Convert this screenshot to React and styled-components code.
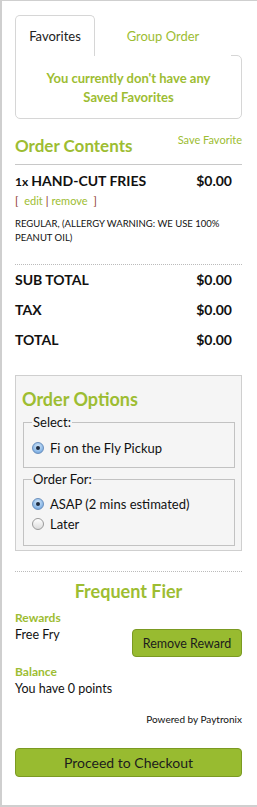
import React from 'react';
import styled, { createGlobalStyle } from 'styled-components';

const GREEN = '#9dbd32';

const GlobalStyle = createGlobalStyle`
  body {
    margin: 0;
    font-family: Lato, "Open Sans", sans-serif;
    color: #111;
    background: #fff;
  }
`;

const Page = styled.div`
  box-sizing: border-box;
  width: 257px;
  height: 807px;
  border-top: 1px solid #cfcfcf;
  border-left: 2px solid #cfcfcf;
  border-bottom: 2px solid #cfcfcf;
  padding: 14px 15px 0 13px;
`;

const TabRow = styled.div`
  display: flex;
`;

const Tab = styled.div`
  width: ${(p) => (p.active ? 80 : 136)}px;
  height: 41px;
  box-sizing: border-box;
  display: flex;
  align-items: center;
  justify-content: center;
  font-size: 13px;
  color: ${(p) => (p.active ? '#222' : GREEN)};
  background: #fff;
  border: 1px solid ${(p) => (p.active ? '#d6d6d6' : 'transparent')};
  border-bottom: none;
  border-radius: 5px 5px 0 0;
  margin-bottom: -1px;
  position: relative;
  z-index: 1;
`;

const TabPanel = styled.div`
  box-sizing: border-box;
  height: 64px;
  border: 1px solid #d6d6d6;
  border-radius: 0 5px 5px 5px;
  display: flex;
  align-items: center;
  justify-content: center;
  text-align: center;
  font-size: 13px;
  line-height: 19px;
  font-weight: 700;
  color: ${GREEN};
  padding-top: 2px;
`;

const SectionHead = styled.div`
  display: flex;
  justify-content: space-between;
  align-items: flex-start;
  margin-top: 14px;
  padding-bottom: 5px;
  border-bottom: 1px solid #c8c8c8;
`;

const Title = styled.h2`
  margin: 0;
  font-size: ${(p) => p.size || 17}px;
  line-height: 26px;
  font-weight: 700;
  color: ${GREEN};
  text-align: ${(p) => (p.center ? 'center' : 'left')};
`;

const SmallLink = styled.span`
  font-size: 11px;
  line-height: 14px;
  color: ${GREEN};
`;

const Item = styled.div`
  padding: 7px 10px 19px 0;
  border-bottom: 1px dotted #bbb;
`;

const ItemRow = styled.div`
  display: flex;
  justify-content: space-between;
  align-items: baseline;
  font-weight: 700;
  font-size: 14px;
  line-height: 18px;
`;

const Qty = styled.span`
  font-size: 12px;
  margin-right: 3px;
`;

const EditLinks = styled.div`
  margin-top: 2px;
  font-size: 11px;
  line-height: 16px;
  color: #8a3324;
  a {
    color: ${GREEN};
    text-decoration: none;
    margin: 0 3px;
  }
`;

const Note = styled.div`
  margin-top: 8px;
  font-size: 9.5px;
  line-height: 14px;
  text-transform: uppercase;
`;

const Totals = styled.div`
  padding: 0 10px 0 0;
`;

const TotalRow = styled.div`
  display: flex;
  justify-content: space-between;
  font-weight: 700;
  font-size: 14px;
  line-height: 30px;
`;

const OptionsBox = styled.div`
  margin-top: 20px;
  box-sizing: border-box;
  height: 176px;
  background: #f5f5f5;
  border: 1px solid #cfcfcf;
  padding: 11px 6px 0 7px;
  h2 {
    line-height: 24px;
    margin-left: -1px;
  }
`;

const Fieldset = styled.fieldset`
  margin: 3px 0 0 0;
  border: 1px solid #c2c2c2;
  padding: ${(p) => (p.first ? '8px 8px 9px' : '7px 8px 11px')};
  min-width: 0;
  legend {
    font-size: 13px;
    line-height: 16px;
    padding: 0 1px;
    margin-left: 0;
  }
`;

const RadioLabel = styled.label`
  display: flex;
  align-items: center;
  gap: 6px;
  height: 20px;
  font-size: 13px;
`;

const Radio = styled.span`
  box-sizing: border-box;
  width: 12px;
  height: 12px;
  border-radius: 50%;
  border: 1px solid ${(p) => (p.checked ? '#6a8fbd' : '#9a9a9a')};
  background: ${(p) =>
    p.checked
      ? 'radial-gradient(circle at 50% 35%, #d5e7f8 0%, #8fbbe8 60%, #5d93d3 100%)'
      : 'linear-gradient(#ffffff, #dcdcdc)'};
  display: flex;
  align-items: center;
  justify-content: center;
  &::after {
    content: '';
    width: 4px;
    height: 4px;
    border-radius: 50%;
    background: ${(p) => (p.checked ? '#1d2b40' : 'transparent')};
  }
`;

const Frequent = styled.div`
  margin-top: 20px;
  border-top: 1px dotted #bbb;
  padding-top: 7px;
  h2 {
    line-height: 24px;
  }
`;

const Label = styled.div`
  margin-top: ${(p) => p.gap || 0}px;
  font-size: 12px;
  line-height: 16px;
  font-weight: 700;
  color: ${GREEN};
`;

const Text = styled.div`
  font-size: 12.5px;
  line-height: 18px;
`;

const RewardRow = styled.div`
  display: flex;
  justify-content: space-between;
  align-items: flex-start;
`;

const Button = styled.button`
  box-sizing: border-box;
  height: ${(p) => (p.wide ? 29 : 28)}px;
  width: ${(p) => (p.wide ? '100%' : '110px')};
  margin-top: ${(p) => p.top || 0}px;
  background: #98bb30;
  border: 1px solid #7b9a22;
  border-radius: 4px;
  font-family: Lato, "Open Sans", sans-serif;
  font-size: ${(p) => (p.wide ? 14 : 12.5)}px;
  color: #1c1c1c;
  cursor: pointer;
`;

const Powered = styled.div`
  margin-top: 14px;
  text-align: right;
  font-size: 10px;
  line-height: 14px;
`;

export default function App() {
  return (
    <>
      <GlobalStyle />
      <Page>
        <TabRow>
          <Tab active>Favorites</Tab>
          <Tab>Group Order</Tab>
        </TabRow>
        <TabPanel>
          You currently don't have any
          <br />
          Saved Favorites
        </TabPanel>

        <SectionHead>
          <Title>Order Contents</Title>
          <SmallLink>Save Favorite</SmallLink>
        </SectionHead>

        <Item>
          <ItemRow>
            <span>
              <Qty>1x</Qty>HAND-CUT FRIES
            </span>
            <span>$0.00</span>
          </ItemRow>
          <EditLinks>
            [ <a href="#edit">edit</a>|<a href="#remove">remove</a> ]
          </EditLinks>
          <Note>Regular, (Allergy Warning: We use 100% Peanut Oil)</Note>
        </Item>

        <Totals>
          <TotalRow>
            <span>SUB TOTAL</span>
            <span>$0.00</span>
          </TotalRow>
          <TotalRow>
            <span>TAX</span>
            <span>$0.00</span>
          </TotalRow>
          <TotalRow>
            <span>TOTAL</span>
            <span>$0.00</span>
          </TotalRow>
        </Totals>

        <OptionsBox>
          <Title size={18}>Order Options</Title>
          <Fieldset first>
            <legend>Select:</legend>
            <RadioLabel>
              <Radio checked />
              Fi on the Fly Pickup
            </RadioLabel>
          </Fieldset>
          <Fieldset>
            <legend>Order For:</legend>
            <RadioLabel>
              <Radio checked />
              ASAP (2 mins estimated)
            </RadioLabel>
            <RadioLabel>
              <Radio />
              Later
            </RadioLabel>
          </Fieldset>
        </OptionsBox>

        <Frequent>
          <Title size={18} center>
            Frequent Fier
          </Title>
          <Label gap={7}>Rewards</Label>
          <RewardRow>
            <Text>Free Fry</Text>
            <Button top={3}>Remove Reward</Button>
          </RewardRow>
          <Label gap={7}>Balance</Label>
          <Text>You have 0 points</Text>
          <Powered>Powered by Paytronix</Powered>
          <Button wide top={22}>
            Proceed to Checkout
          </Button>
        </Frequent>
      </Page>
    </>
  );
}
